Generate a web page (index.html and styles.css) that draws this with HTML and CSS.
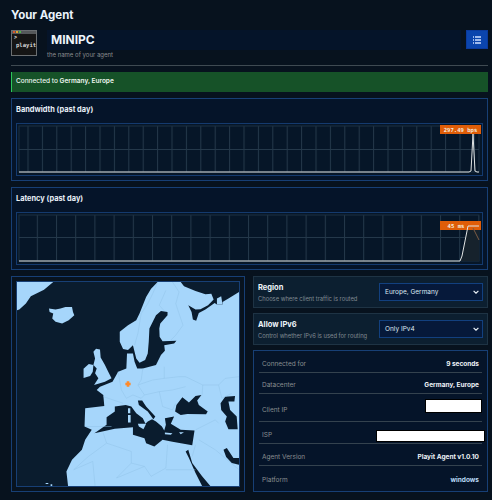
FILE: index.html
```html
<!DOCTYPE html>
<html lang="en">
<head>
<meta charset="utf-8">
<title>Your Agent</title>
<link rel="stylesheet" href="styles.css">
</head>
<body>
<main class="page">
  <h1 class="title">Your Agent</h1>
  <header class="agent">
    <div class="logo">
      <div class="logo-bar"><i class="dot red"></i><i class="dot amber"></i><i class="dot green"></i></div>
      <div class="logo-body"><span class="prompt">&gt;</span><span class="logo-text">playit</span></div>
    </div>
    <div class="name-col">
      <div class="name-field">MINIPC</div>
      <div class="name-hint">the name of your agent</div>
    </div>
    <button class="menu-btn" aria-label="menu">
      <svg width="8" height="8" viewBox="0 0 8 8"><path d="M0 1h1M0 4h1M0 7h1M2 1h6M2 4h6M2 7h6" stroke="#cfe0ff" stroke-width="1.3" fill="none"/></svg>
    </button>
  </header>
  <hr class="rule">
  <div class="alert">Connected to <b>Germany, Europe</b></div>

  <section class="chart-card">
    <h2 class="chart-title">Bandwidth (past day)</h2>
    <div class="chart-box">
      <svg class="chart" viewBox="17 124 465 51">
        <defs>
          <pattern id="g1" patternUnits="userSpaceOnUse" x="344.3" y="0" width="14.4" height="100"><path d="M0.5 0V100" stroke="#24384a" stroke-width="1"/></pattern>
        </defs>
        <rect x="19" y="126" width="460" height="46" fill="url(#g1)"/>
        <rect x="19" y="126" width="460" height="46" fill="none" stroke="#1d3042" stroke-width="1"/>
        <path d="M19 149.5H479" stroke="#24384a"/>
        <path d="M19 172H469L471 171 473 134 475 171 477 172H479" fill="none" stroke="#dfe3e3" stroke-width="1"/>
        <rect x="440" y="125" width="41" height="9" fill="#df5d08"/>
        <text x="460.5" y="132" class="badge-text">297.49 bps</text>
      </svg>
    </div>
  </section>

  <section class="chart-card">
    <h2 class="chart-title">Latency (past day)</h2>
    <div class="chart-box">
      <svg class="chart" viewBox="17 213 465 51">
        <defs>
          <pattern id="g2" patternUnits="userSpaceOnUse" x="344" y="0" width="19.2" height="100"><path d="M0.5 0V100" stroke="#24384a" stroke-width="1"/></pattern>
        </defs>
        <rect x="19" y="215" width="460" height="46" fill="url(#g2)"/>
        <rect x="19" y="215" width="460" height="46" fill="none" stroke="#1d3042" stroke-width="1"/>
        <path d="M19 237.5H479" stroke="#24384a"/>
        <path d="M460 261 468 226H479V261Z" fill="#16222c"/>
        <rect x="440" y="221" width="41" height="9" fill="#df5d08"/>
        <text x="456" y="228" class="badge-text">45 ms</text>
        <path d="M473 228 479 240" stroke="#7a5a44" stroke-width="1" fill="none"/>
        <path d="M19 261H460L462 256 468 226H479" fill="none" stroke="#dfe3e3" stroke-width="1"/>
      </svg>
    </div>
  </section>

  <div class="bottom">
    <section class="map-card">
      <div class="map-box">
        <svg class="map" viewBox="48 35 674 614" preserveAspectRatio="none">
          <rect x="48" y="35" width="674" height="614" fill="#0a1c2e"/>
          <g fill="#a6d6fb">
            <path d="M48 35H158L130 58 90 78 75 100 55 118 48 120Z"/>
            <path d="M145 115 165 118 180 115 195 110 215 110 218 125 222 135 205 150 185 160 165 155 155 145 158 130 147 125Z"/>
            <path d="M250 296 266 282 280 285 278 305 270 318 250 324Z"/>
            <path d="M280 245 288 236 300 238 302 262 315 285 325 305 335 325 315 335 282 345 295 325 285 310 290 295 280 285 285 265Z"/>
            <path d="M655 85 668 78 672 103 655 103Z"/>
            <path d="M475 35 455 55 440 80 420 130 410 150 385 165 360 185 360 215 370 237 385 240 400 225 410 265 420 278 437 270 445 250 448 215 450 175 470 135 485 122 505 125 505 135 483 160 480 175 481 200 490 213 532 212 525 220 495 225 497 242 485 255 470 285 430 295 413 295 405 275 400 250 382 250 380 295 355 305 338 335 300 350 290 360 310 375 313 408 255 415 253 470 275 480 255 510 245 540 215 570 198 605 203 649H722V65L690 85 672 95 672 103 655 103 648 98 620 118 600 128 592 152 582 148 578 125 568 105 590 118 605 117 628 105 645 88 638 70 620 72 590 62 555 48 545 35Z"/>
          </g>
          <g fill="#0a1c2e">
            <path d="M283 490 320 465 320 442 345 425 345 410 378 405 395 410 410 430 430 445 438 462 445 455 458 448 470 455 488 470 495 482 500 465 497 445 525 440 515 462 545 480 587 482 580 526 520 516 490 510 465 530 440 520 435 505 400 495 400 472 345 477Z"/>
            <path d="M415 392 428 392 440 410 468 440 462 448 445 425 418 405Z"/>
            <path d="M528 425 532 405 550 382 570 398 590 378 608 375 595 392 600 405 627 425 622 433 565 432 545 435Z"/>
            <path d="M666 400 680 380 710 378 708 395 690 395 695 420 715 440 718 478 690 478 680 455 685 440 668 420Z"/>
            <path d="M560 545 568 540 580 580 610 620 635 649H610L590 610 570 565Z"/>
            <path d="M675 540 685 535 705 565 722 565V585L700 580 683 562Z"/>
          </g>
          <g fill="#a6d6fb">
            <path d="M385 415h7v15h-7zM385 435h8v23h-8z"/>
            <path d="M415 462H440L432 478 418 470Z"/>
            <path d="M497 488 520 490 515 495 497 493ZM540 487H555L545 493Z"/>
          </g>
          <path d="M135 640h8v3h-8zM150 644h5v5h-5z" fill="#a6d6fb"/>
          <g fill="none" stroke="#8fc1e8" stroke-width="1.4">
            <path d="M475 35 460 70 445 100 425 130 415 190 405 225M500 60 480 105 495 122M540 130 552 165 530 195 515 210M520 35 540 65 530 100 540 130"/>
            <path d="M430 295 425 330 415 345 435 375 425 385M495 290 495 325 540 320 560 320 612 345 610 375M415 345 460 330 495 325M435 375 480 365 520 360 560 350M355 305 365 360 380 385 400 375 425 385M310 380 370 400M255 470H335"/>
            <path d="M480 365 490 410 520 420 530 400M612 345 660 345 680 325 722 320M660 345 670 385 700 370"/>
            <path d="M310 490 320 520 265 560 220 600 278 575 285 649M320 520 395 545 395 580 435 590 455 620 500 595 505 525M350 625 435 590M395 580 350 625M500 600H590M590 525 580 560M590 480 650 450 660 460M600 510 650 540 722 600"/>
          </g>
          <path d="M381 334h8v4h4v8h-4v4h-8v-4h-4v-8h4z" fill="#ff8a2a"/>
        </svg>
      </div>
    </section>

    <div class="side">
      <section class="setting">
        <div class="setting-text">
          <h3>Region</h3>
          <p>Choose where client traffic is routed</p>
        </div>
        <div class="fake-select">Europe, Germany<svg width="6" height="4" viewBox="0 0 6 4"><path d="M.6.8 3 3.2 5.4.8" fill="none" stroke="#e8eef5" stroke-width="1.2"/></svg></div>
      </section>
      <section class="setting">
        <div class="setting-text">
          <h3>Allow IPv6</h3>
          <p>Control whether IPv6 is used for routing</p>
        </div>
        <div class="fake-select">Only IPv4<svg width="6" height="4" viewBox="0 0 6 4"><path d="M.6.8 3 3.2 5.4.8" fill="none" stroke="#e8eef5" stroke-width="1.2"/></svg></div>
      </section>
      <section class="details">
        <div class="row h22"><span class="key">Connected for</span><span class="val">9 seconds</span></div>
        <div class="row h21"><span class="key">Datacenter</span><span class="val">Germany, Europe</span></div>
        <div class="row h28"><span class="key">Client IP</span><span class="redact ip"></span></div>
        <div class="row h22"><span class="key">ISP</span><span class="redact isp"></span></div>
        <div class="row h22"><span class="key">Agent Version</span><span class="val">Playit Agent v1.0.10</span></div>
        <div class="row last"><span class="key">Platform</span><span class="val plat">windows</span></div>
      </section>
    </div>
  </div>
</main>
</body>
</html>
```
FILE: styles.css
```css
* { box-sizing: border-box; }
html, body { margin: 0; height: 100%; }
body {
  background: #07121e;
  color: #f0f5fb;
  font-family: Inter, "Liberation Sans", sans-serif;
  overflow: hidden;
}
.page { padding: 7px 4px 8px 11px; }
.title { margin: 0 0 7px; font-size: 11.5px; line-height: 16px; font-weight: 700; color: #eaf3fc; }

.agent { display: flex; align-items: flex-start; height: 26px; }
.logo { width: 26px; height: 26px; background: #6b6f72; padding: 1px; flex: none; display: flex; flex-direction: column; }
.logo-bar { height: 3px; display: flex; gap: 1px; padding: 0 1px; background: #55585a; }
.dot { width: 2px; height: 2px; display: block; }
.red { background: #d9562c; }
.amber { background: #e0a52c; }
.green { background: #4fb24a; }
.logo-body { flex: 1; background: #151515; padding: 2px 2px 0; display: flex; flex-direction: column; }
.prompt { font: 700 5px/4px "Liberation Mono", monospace; color: #eee; }
.logo-text { margin: 1px 0 0 2px; font: 700 5.6px/8px "DejaVu Sans Mono", monospace; color: #d8d8d8; }
.name-col { margin-left: 10px; flex: 1; }
.name-field { height: 20px; background: #051429; padding-left: 4px; font-size: 12px; line-height: 19px; font-weight: 700; color: #eef5fc; }
.name-hint { font-size: 6px; line-height: 7px; margin-top: 1px; color: #8b8e90; }
.menu-btn { width: 22px; height: 19px; margin-left: 5px; border: 1px solid #0a3a9c; background: #0b45ad; padding: 0; display: flex; align-items: center; justify-content: center; flex: none; }

.rule { height: 1px; margin: 9px 0 6px; border: 0; background: #3f4a52; }
.alert { height: 20px; background: #165228; border-left: 1px solid #2bc85a; padding-left: 4px; font-size: 6.5px; font-weight: 500; line-height: 19px; color: #eef7ef; }
.alert b { font-weight: 600; }

.chart-card { height: 83px; margin-top: 6px; padding: 6px 4px 4px; background: #051429; border: 1px solid #173f75; display: flex; flex-direction: column; }
.chart-title { margin: 0; height: 18px; font-size: 7.4px; line-height: 10px; font-weight: 700; color: #e8f0f8; }
.chart-box { flex: 1; border: 1px solid #143a6e; background: #061628; min-height: 0; }
.chart { display: block; width: 100%; height: 100%; }
.badge-text { font: 700 5.6px "DejaVu Sans Mono", monospace; fill: #f4e8dc; text-anchor: middle; }

.bottom { display: flex; gap: 8px; margin-top: 6px; height: 216px; }
.map-card { width: 234px; border: 1px solid #173f75; padding: 4px; flex: none; background: #08131f; }
.map-box { width: 100%; height: 100%; border: 1px solid #173f75; }
.map { display: block; width: 100%; height: 100%; }

.side { flex: 1; display: flex; flex-direction: column; gap: 5px; min-width: 0; }
.setting { height: 32px; flex: none; display: flex; align-items: center; justify-content: space-between; padding: 0 4px 0 4px; background: #0c1f30; border: 1px solid #1e3344; }
.setting h3 { margin: 0 0 3px; font-size: 7.5px; line-height: 9px; font-weight: 700; color: #eef5fb; }
.setting p { margin: 0; font-size: 5.8px; line-height: 7px; color: #808a92; white-space: nowrap; }
.fake-select { width: 104px; height: 18px; flex: none; padding: 0 3px 0 5px; display: flex; align-items: center; justify-content: space-between; background: #06193a; border: 1px solid #12407f; font-size: 6.5px; color: #dfe8f2; }

.details { flex: 1; min-height: 0; padding: 0 5px; background: #051429; border: 1px solid #173f75; }
.row { display: flex; align-items: center; justify-content: space-between; padding: 4px 3px 0; border-bottom: 1px solid #34424e; }
.h22 { height: 22px; }
.h21 { height: 21px; }
.h28 { height: 28px; }
.row.last { border-bottom: 0; height: 24px; }
.key { font-size: 6.5px; color: #8a8e90; }
.val { font-size: 6.5px; font-weight: 700; color: #eef3f8; }
.plat { color: #bcdcf8; }
.redact { display: block; background: #fff; border: 1px solid #000; height: 14px; }
.ip { width: 57px; margin: 0 -3px 7px 0; }
.isp { width: 109px; height: 12px; margin: 3px -6px 0 0; }
```
